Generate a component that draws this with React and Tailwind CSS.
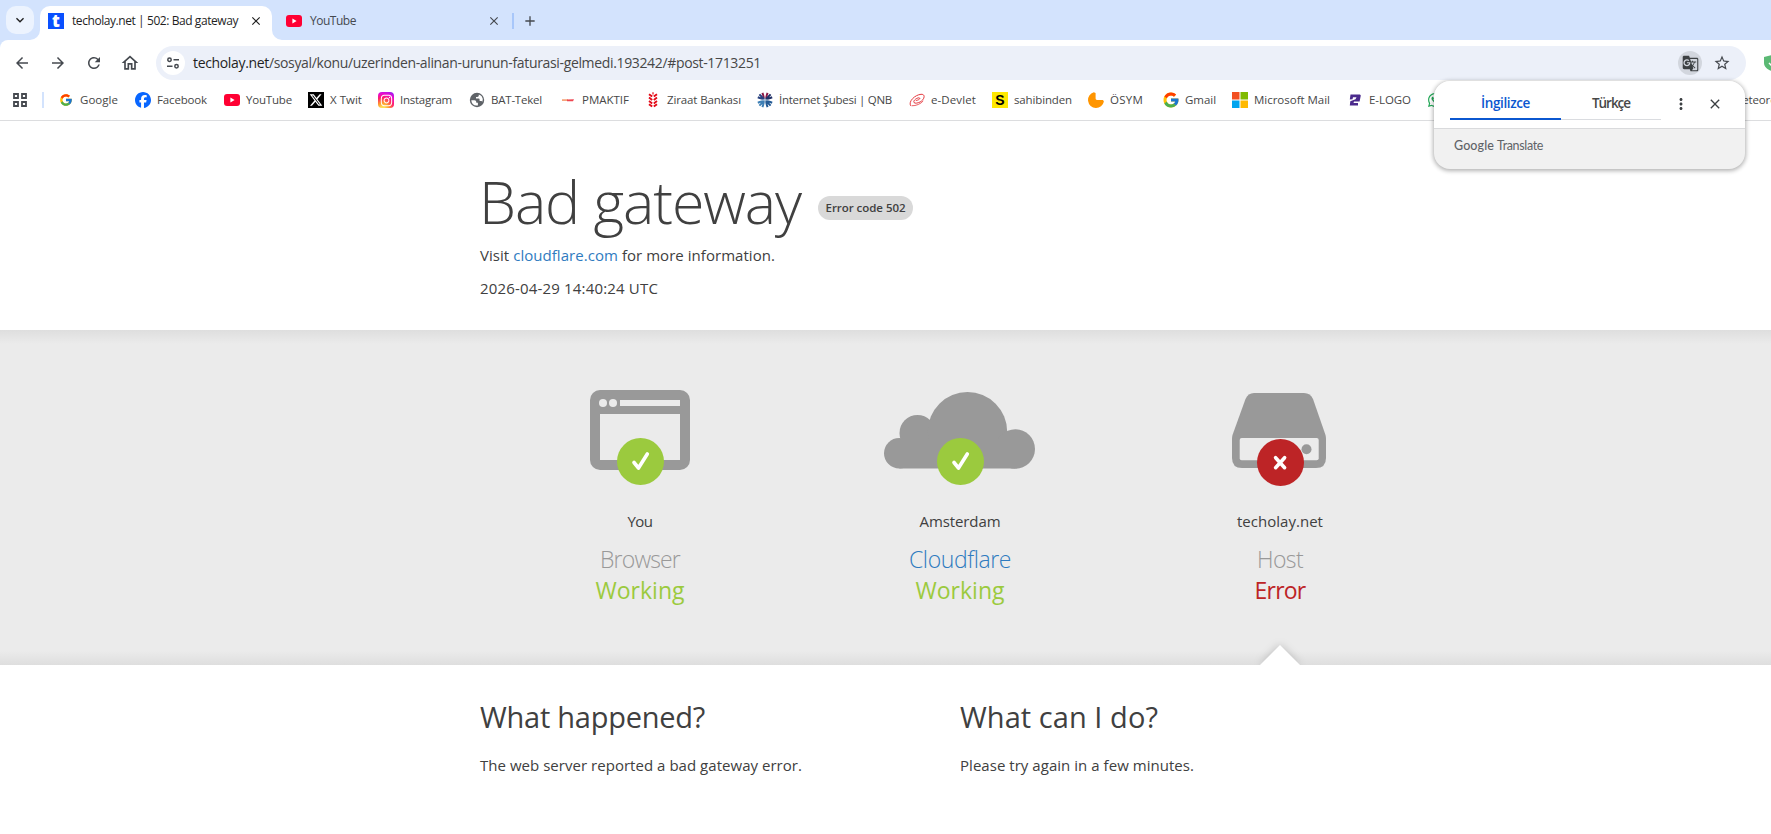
import { useLayoutEffect, useRef, useState } from "react";
import { FcGoogle } from "react-icons/fc";
import { FaFacebook, FaInstagram, FaXTwitter, FaWhatsapp } from "react-icons/fa6";
import {
  MdArrowBack,
  MdArrowForward,
  MdRefresh,
  MdOutlineHome,
  MdGTranslate,
  MdStarOutline,
  MdClose,
  MdAdd,
  MdMoreVert,
  MdKeyboardArrowDown,
} from "react-icons/md";

/* Text that is tracked so that it fills exactly `w` pixels. */
function Fit({ w, className = "", children }) {
  const ref = useRef(null);
  const [spacing, setSpacing] = useState(0);
  useLayoutEffect(() => {
    const el = ref.current;
    const natural = el.getBoundingClientRect().width;
    setSpacing((w - natural) / el.textContent.length);
  }, [w]);
  return (
    <span className={`inline-block whitespace-nowrap ${className}`} style={{ width: w }}>
      <span ref={ref} style={{ letterSpacing: spacing }}>
        {children}
      </span>
    </span>
  );
}

function YouTubeIcon() {
  return (
    <svg viewBox="0 0 16 16" className="size-4 shrink-0">
      <rect y="2" width="16" height="12" rx="3" fill="#ff0033" />
      <path d="M6.4 5.6v4.8L10.6 8z" fill="#fff" />
    </svg>
  );
}

function XIcon() {
  return (
    <span className="flex size-4 shrink-0 items-center justify-center bg-black">
      <FaXTwitter className="size-3.5 text-white" />
    </span>
  );
}

function InstagramIcon() {
  return (
    <span className="flex size-4 shrink-0 items-center justify-center rounded bg-[radial-gradient(circle_at_30%_105%,#ffdd55_10%,#ff9a2e_30%,#ff1f6b_55%,#e80bd0_75%,#7a22ff_100%)]">
      <FaInstagram className="size-[13px] text-white" />
    </span>
  );
}

function GlobeIcon() {
  return (
    <svg viewBox="0 0 16 16" className="size-4 shrink-0">
      <circle cx="8" cy="8" r="7.200" fill="#5f6368" />
      <path d="M2.300 8.300h3.200q1.800 0 1.800 1.700v.8h1.600v2.600q-3.200.7-5.200-1.500-1.300-1.600-1.400-3.600z" fill="#fff" />
      <path d="M9.800 2.600v1q0 1.300-1.500 1.300H7v1.500h2.600q1 0 1 1v1.500h1.600q.9 0 1.200.8 1-3.200-.6-5.200-1.200-1.500-3-1.900z" fill="#fff" />
    </svg>
  );
}

function PmIcon() {
  return (
    <svg viewBox="0 0 16 16" className="size-4 shrink-0">
      <path d="M2 7.3h6v1.6H2z" fill="#f59a6c" />
      <path d="M7 7.5l7-.2-1 1.9H7z" fill="#ee4550" />
    </svg>
  );
}

function WheatIcon() {
  return (
    <svg viewBox="0 0 16 16" className="size-4 shrink-0" fill="none" stroke="#e30a17" strokeWidth="1.9">
      <path d="M4 2.2l3.2 2.4M4 5.6l3.2 2.4M4 9l3.2 2.4M4 12.2l3.2 2.4M12 2.2L8.8 4.6M12 5.6L8.8 8M12 9l-3.2 2.4M12 12.2l-3.2 2.4" />
      <path d="M8 .3v2.2" strokeWidth="1.2" />
    </svg>
  );
}

function QnbIcon() {
  return (
    <svg viewBox="0 0 16 16" className="size-4 shrink-0" fill="none" strokeWidth="2">
      <path d="M8 8L5.4.8M8 8L10.6.8" stroke="#8a1746" />
      <path d="M8 8L.8 5.2M8 8L2.4 2.4" stroke="#27407e" />
      <path d="M8 8l7.2-2.8M8 8l5.6-5.6" stroke="#1f2f66" />
      <path d="M8 8L.8 10.8M8 8l-5.600 5.600M8 8l-2.600 7.200" stroke="#3d7fb5" />
      <path d="M8 8l7.200 2.800M8 8l5.600 5.600M8 8l2.600 7.200" stroke="#235a94" />
      <path d="M8 .5v15M.5 8h15" stroke="#fff" strokeWidth=".7" />
    </svg>
  );
}

function DevletIcon() {
  return (
    <svg viewBox="0 0 16 16" className="size-4 shrink-0" fill="none" stroke="#e5393f" strokeLinecap="round">
      <path d="M1.500 13.500C-1 9.500 6 2.800 12 2.300c4.500-.3 3.800 4.300.2 7C9 11.500 4.500 12 4.800 9.600 5 7.600 9 5.200 10.600 6c1 .8-1.400 2.300-3.400 2.500" strokeWidth="1" />
      <path d="M3 13.800c4 .2 9-2 11-4.600" strokeWidth=".8" />
    </svg>
  );
}

function SahibindenIcon() {
  return (
    <span className="flex size-4 shrink-0 items-center justify-center bg-[#ffe800] font-['Liberation_Sans',sans-serif] text-[14px] leading-none font-bold text-black">
      S
    </span>
  );
}

function OsymIcon() {
  return (
    <svg viewBox="0 0 16 16" className="size-4 shrink-0">
      <path d="M5.800.3A8 8 0 1 0 15.900 9.500L15 8H9Q7.600 8 7.600 6.600V.9z" fill="#ff9500" />
    </svg>
  );
}

function MicrosoftIcon() {
  return (
    <svg viewBox="0 0 16 16" className="size-4 shrink-0">
      <path d="M0 0h7.500v7.500H0z" fill="#f25022" />
      <path d="M8.500 0H16v7.500H8.500z" fill="#7fba00" />
      <path d="M0 8.500h7.500V16H0z" fill="#00a4ef" />
      <path d="M8.500 8.500H16V16H8.500z" fill="#ffb900" />
    </svg>
  );
}

function ELogoIcon() {
  return (
    <svg viewBox="0 0 16 16" className="size-4 shrink-0" fill="#4b2a8c">
      <path d="M3.500 2.500H13L13.800 3.600 12.600 9.500H7L6.500 11H11L11 13.500H2.800L3.300 9.200 8.500 7.200 9.500 5.300H6L5.500 7.200 2.800 7.600z" />
    </svg>
  );
}

const BOOKMARKS = [
  { label: "Google", w: 38, gap: "mr-[17px]", icon: <FcGoogle className="size-4 shrink-0 p-px" /> },
  { label: "Facebook", w: 50, gap: "mr-[17px]", icon: <FaFacebook className="size-4 shrink-0 text-[#0866ff]" /> },
  { label: "YouTube", w: 46, gap: "mr-4", icon: <YouTubeIcon /> },
  { label: "X Twit", w: 32, gap: "mr-4", icon: <XIcon /> },
  { label: "Instagram", w: 52, gap: "mr-[17px]", icon: <InstagramIcon /> },
  { label: "BAT-Tekel", w: 51, gap: "mr-[18px]", icon: <GlobeIcon /> },
  { label: "PMAKTIF", w: 47, gap: "mr-4", icon: <PmIcon /> },
  { label: "Ziraat Bankası", w: 74, gap: "mr-4", icon: <WheatIcon /> },
  { label: "İnternet Şubesi | QNB", w: 113, gap: "mr-[17px]", icon: <QnbIcon /> },
  { label: "e-Devlet", w: 45, gap: "mr-4", icon: <DevletIcon /> },
  { label: "sahibinden", w: 58, gap: "mr-4", icon: <SahibindenIcon /> },
  { label: "ÖSYM", w: 33, gap: "mr-5", icon: <OsymIcon /> },
  { label: "Gmail", w: 31, gap: "mr-4", icon: <FcGoogle className="-mx-px size-[18px] shrink-0" /> },
  { label: "Microsoft Mail", w: 76, gap: "mr-[17px]", icon: <MicrosoftIcon /> },
  { label: "E-LOGO", w: 42, gap: "mr-4", icon: <ELogoIcon /> },
];

function TabStrip() {
  return (
    <div className="flex h-10 items-end bg-[#d3e3fd]">
      <div className="mb-1.5 ml-1.5 flex size-7 shrink-0 items-center justify-center rounded-[10px] bg-[#ecf3fe] text-[#1f1f1f]">
        <MdKeyboardArrowDown className="size-4" />
      </div>
      <svg viewBox="0 0 10 10" className="-ml-1 size-2.5 shrink-0">
        <path d="M10 0v10H0A10 10 0 0 0 10 0z" fill="#fff" />
      </svg>
      <div className="flex h-[34px] w-[232px] shrink-0 items-center rounded-t-[10px] bg-white pb-1 pl-2 text-[12px] text-[#1f1f1f]">
        <span className="flex size-4 items-center justify-center bg-[#0a50ff] font-['Open_Sans',sans-serif] text-[17px] leading-none font-extrabold text-white">
          <span className="pb-0.5">t</span>
        </span>
        <Fit w={166} className="ml-2">
          techolay.net | 502: Bad gateway
        </Fit>
        <MdClose className="ml-[11px] size-3.5" />
      </div>
      <svg viewBox="0 0 10 10" className="size-2.5 shrink-0">
        <path d="M0 0v10h10A10 10 0 0 1 0 0z" fill="#fff" />
      </svg>
      <div className="flex h-[34px] items-center pb-1 pl-1 text-[12px] text-[#45494f]">
        <YouTubeIcon />
        <Fit w={46} className="ml-2">
          YouTube
        </Fit>
        <MdClose className="ml-[131px] size-3.5" />
        <span className="ml-[11px] h-4 w-0.5 bg-[#a8c7fa]" />
        <MdAdd className="ml-2 size-4" />
      </div>
    </div>
  );
}

function Toolbar() {
  return (
    <div className="flex h-[46px] items-center rounded-tl-lg bg-white pl-[13px] text-[#45494f]">
      <MdArrowBack className="size-[18px] shrink-0" />
      <MdArrowForward className="ml-[18px] size-[18px] shrink-0" />
      <MdRefresh className="ml-[18px] size-[18px] shrink-0" />
      <MdOutlineHome className="ml-[17px] size-5 shrink-0" />
      <div className="ml-4 flex h-[34px] w-[1590px] shrink-0 items-center rounded-full bg-[#ecf0f9] pl-[5px]">
        <span className="flex size-6 items-center justify-center rounded-full bg-white">
          <svg viewBox="0 0 14 14" className="size-3.5" fill="none" stroke="#45494f" strokeWidth="1.500">
            <circle cx="3.500" cy="3.700" r="1.700" />
            <path d="M7.500 3.700H13M1 10.300h5.500" />
            <circle cx="10.500" cy="10.300" r="1.700" />
          </svg>
        </span>
        <Fit w={568} className="ml-2 text-[14px] leading-5 text-[#474747]">
          <span className="text-[#1f1f1f]">techolay.net</span>
          /sosyal/konu/uzerinden-alinan-urunun-faturasi-gelmedi.193242/#post-1713251
        </Fit>
        <span className="ml-auto flex size-6 items-center justify-center rounded-full bg-[#d2d6de]">
          <MdGTranslate className="size-[17px] text-[#3c4043]" />
        </span>
        <MdStarOutline className="mr-[15px] ml-[11px] size-[18px]" />
      </div>
      <svg viewBox="0 0 16 16" className="ml-[18px] size-4 shrink-0">
        <path d="M8 0l8 2v6c0 4-4 7-8 8C4 15 0 12 0 8V2z" fill="#5bb974" />
        <path d="M5 8l2 2 4-4" stroke="#fff" strokeWidth="1.500" fill="none" />
      </svg>
    </div>
  );
}

function BookmarksBar() {
  return (
    <div className="flex h-[35px] items-center overflow-hidden border-b border-[#dcdddf] bg-white pb-1.5 pl-[13px] text-[11.500px] text-[#474747]">
      <svg viewBox="0 0 14 14" className="size-3.5 shrink-0" fill="none" stroke="#45494f" strokeWidth="1.800">
        <path d="M1 1h4v4H1zM9 1h4v4H9zM1 9h4v4H1zM9 9h4v4H9z" />
      </svg>
      <span className="mx-[15px] mr-3.5 h-4 w-0.5 shrink-0 bg-[#d3e3fd]" />
      {BOOKMARKS.map((b, i) => (
        <div key={i} className={`flex shrink-0 items-center gap-1.5 ${b.gap}`}>
          {b.icon}
          <Fit w={b.w} className="leading-4">
            {b.label}
          </Fit>
        </div>
      ))}
      <FaWhatsapp className="size-4 shrink-0 text-[#1fa855]" />
      <Fit w={60} className="ml-[289px] shrink-0 leading-4">
        Meteoroloji
      </Fit>
    </div>
  );
}

function TranslatePopup() {
  return (
    <div className="absolute top-[81px] left-[1434px] h-[88px] w-[311px] overflow-hidden rounded-2xl bg-[#f1f1f1] shadow-[0_1px_4px_1px_rgba(0,0,0,0.3)]">
      <div className="flex h-12 items-start border-b border-[#d9dadc] bg-white pl-4 text-[13.500px] font-semibold">
        <div className="flex h-[39px] w-[111px] items-center justify-center border-b-2 border-[#0b57d0] pt-2 text-[#0b57d0]">
          <Fit w={49}>İngilizce</Fit>
        </div>
        <div className="flex h-[39px] w-[100px] items-center justify-center border-b border-[#dadce0] pt-[7px] text-[#474747]">
          <Fit w={38}>Türkçe</Fit>
        </div>
        <MdMoreVert className="mt-[14px] ml-[11px] size-[18px] text-[#3c4043]" />
        <MdClose className="mt-[15px] ml-[17px] size-4 text-[#3c4043]" />
      </div>
      <div className="pt-2 pl-5 text-[12.500px] leading-[18px] text-[#5f6368]">
        <Fit w={40} className="font-['Lato',sans-serif] font-medium">Google</Fit>
        <Fit w={46} className="ml-[3px] font-['Lato',sans-serif]">Translate</Fit>
      </div>
    </div>
  );
}

function CheckBadge() {
  return (
    <g>
      <circle cx="80.500" cy="71.500" r="23.500" fill="#9bca3e" />
      <path d="M74 72.500l4.500 5.500L87.300 64" fill="none" stroke="#fff" strokeWidth="3.600" strokeLinecap="round" strokeLinejoin="round" />
    </g>
  );
}

function BrowserDrawing() {
  return (
    <svg viewBox="0 0 160 96" className="h-24 w-40">
      <rect x="30" y="0" width="100" height="80" rx="10" fill="#999" />
      <path d="M60 10h60v6H60zM40 24h80v46H40z" fill="#ebebeb" />
      <circle cx="43" cy="13" r="4" fill="#ebebeb" />
      <circle cx="53" cy="13" r="4" fill="#ebebeb" />
      <CheckBadge />
    </svg>
  );
}

function CloudDrawing() {
  return (
    <svg viewBox="0 0 160 96" className="h-24 w-40">
      <g fill="#999">
        <circle cx="19.300" cy="63.300" r="15.300" />
        <circle cx="37.500" cy="43" r="18" />
        <circle cx="87.500" cy="41.700" r="39.700" />
        <circle cx="135.300" cy="59" r="19.700" />
        <path d="M19.300 50h116v28.600h-116z" />
      </g>
      <CheckBadge />
    </svg>
  );
}

function HostDrawing() {
  return (
    <svg viewBox="0 0 160 96" className="h-24 w-40">
      <path d="M54 3h50q6.500 0 9 6l12.500 36q.5 2 .5 4v19q0 10-10 10H42q-10 0-10-10V49q0-2 .5-4L45.500 9q2.500-6 8.500-6z" fill="#999" />
      <rect x="39.700" y="48" width="79" height="22.300" rx="2" fill="#ebebeb" />
      <circle cx="106.500" cy="59.300" r="5" fill="#999" />
      <circle cx="80.500" cy="72.500" r="23.500" fill="#bd2426" />
      <path d="M75.600 67.700l9 10M84.600 67.700l-9 10" stroke="#fff" strokeWidth="3.600" strokeLinecap="round" />
    </svg>
  );
}

function Status({ drawing, place, placeW, name, nameW, nameClass, status, statusW, statusClass }) {
  return (
    <div className="flex w-80 flex-col items-center">
      {drawing}
      <Fit w={placeW} className="mt-[23px] text-[15px] leading-6">{place}</Fit>
      <Fit w={nameW} className={`mt-[11px] text-[23px] leading-[31px] font-light ${nameClass}`}>{name}</Fit>
      <Fit w={statusW} className={`text-[23px] leading-[31px] ${statusClass}`}>{status}</Fit>
    </div>
  );
}

export default function App() {
  return (
    <div className="relative h-[834px] w-[1771px] overflow-hidden bg-white font-['Open_Sans',sans-serif] text-[#404040]">
      <div className="bg-[#d3e3fd]">
        <TabStrip />
        <Toolbar />
      </div>
      <BookmarksBar />

      <header className="h-[209px] pt-11 pl-[480px]">
        <div className="flex">
          <Fit w={322} className="-ml-px text-[59px] leading-[72px] font-light">Bad gateway</Fit>
          <span className="mt-[31px] ml-[17px] flex h-6 w-[95px] items-center justify-center rounded-full bg-[#d9d9d9] text-[11.500px] font-semibold">
            <Fit w={80}>Error code 502</Fit>
          </span>
        </div>
        <div className="mt-1.5 text-[15px] leading-6">
          <Fit w={295}>
            Visit <span className="text-[#2f7bbf]">cloudflare.com</span> for more information.
          </Fit>
        </div>
        <div className="mt-[9px] text-[15px] leading-6">
          <Fit w={178}>2026-04-29 14:40:24 UTC</Fit>
        </div>
      </header>

      <section className="flex h-[335px] flex-col bg-[#ebebeb] bg-[linear-gradient(to_bottom,#dedede,#ebebeb_14px,#ebebeb_321px,#dedede)]">
        <div className="flex pt-[60px] pl-[480px]">
          <Status
            drawing={<BrowserDrawing />}
            place="You" placeW={25}
            name="Browser" nameW={80} nameClass="text-[#999]"
            status="Working" statusW={89} statusClass="text-[#9bca3e]"
          />
          <Status
            drawing={<CloudDrawing />}
            place="Amsterdam" placeW={81}
            name="Cloudflare" nameW={102} nameClass="text-[#2f7bbf]"
            status="Working" statusW={89} statusClass="text-[#9bca3e]"
          />
          <Status
            drawing={<HostDrawing />}
            place="techolay.net" placeW={86}
            name="Host" nameW={46} nameClass="text-[#999]"
            status="Error" statusW={51} statusClass="text-[#bd2426]"
          />
        </div>
        <svg viewBox="0 0 60 28" className="mt-auto ml-[1250px] h-7 w-[60px] shrink-0">
          <path d="M10 28L30 8l20 20z" fill="#fff" className="drop-shadow-[0_0_4px_rgba(0,0,0,0.2)]" />
        </svg>
      </section>

      <section className="flex pt-8 pl-[480px]">
        <div className="w-[480px]">
          <h2 className="text-[29px] leading-[40px]"><Fit w={225}>What happened?</Fit></h2>
          <p className="mt-4 text-[15px] leading-6"><Fit w={322}>The web server reported a bad gateway error.</Fit></p>
        </div>
        <div className="w-[480px]">
          <h2 className="text-[29px] leading-[40px]"><Fit w={198}>What can I do?</Fit></h2>
          <p className="mt-4 text-[15px] leading-6"><Fit w={234}>Please try again in a few minutes.</Fit></p>
        </div>
      </section>

      <TranslatePopup />
    </div>
  );
}
